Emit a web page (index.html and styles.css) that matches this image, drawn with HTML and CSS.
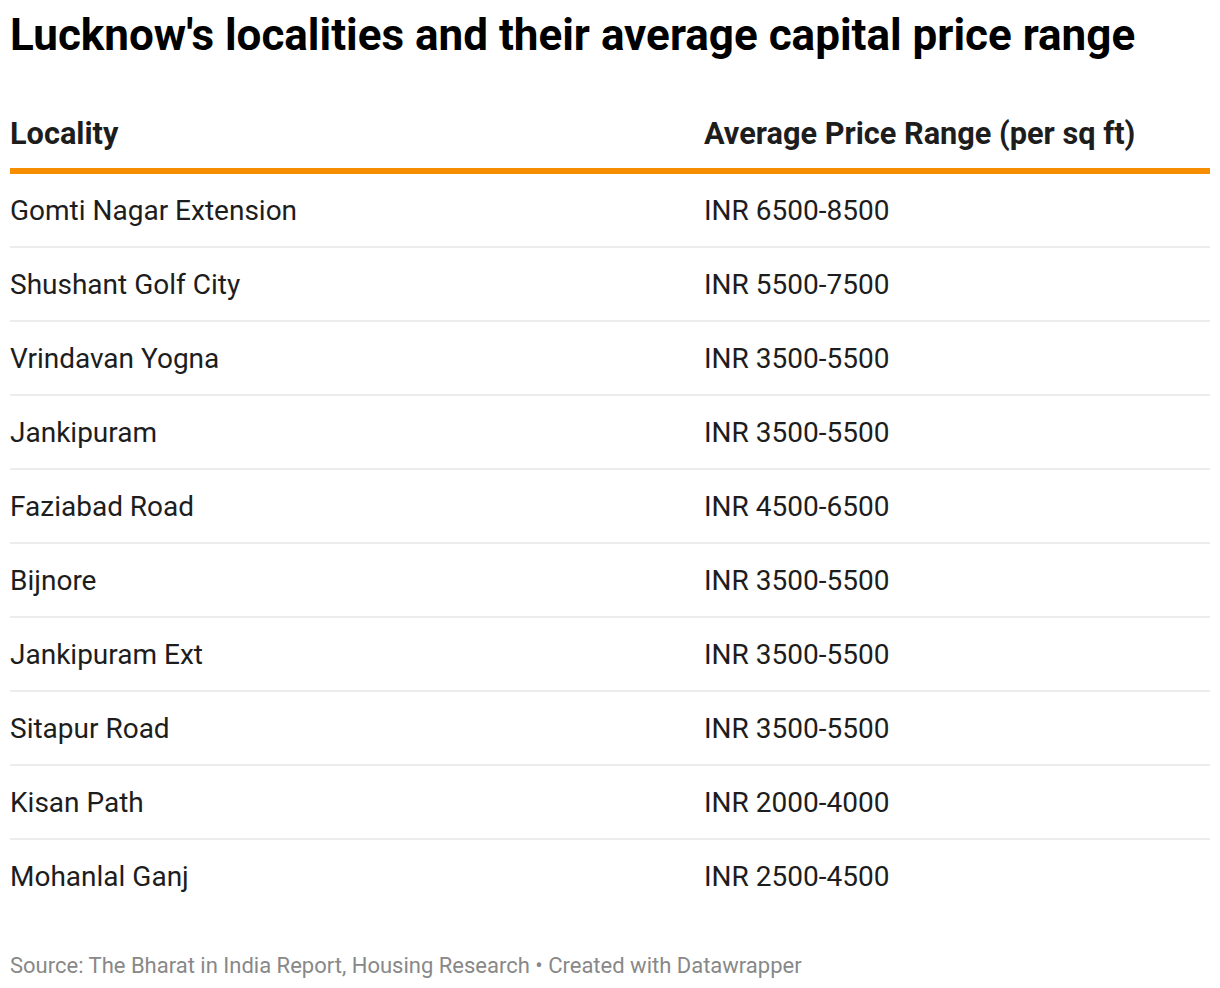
FILE: index.html
```html
<!DOCTYPE html>
<html lang="en">
<head>
<meta charset="utf-8">
<title>Lucknow's localities and their average capital price range</title>
<link rel="stylesheet" href="styles.css">
</head>
<body>
<div class="chart">
  <h1 class="title">Lucknow's localities and their average capital price range</h1>
  <div class="table">
    <div class="row head">
      <div class="cell">Locality</div>
      <div class="cell">Average Price Range (per sq ft)</div>
    </div>
    <div class="row"><div class="cell">Gomti Nagar Extension</div><div class="cell">INR 6500-8500</div></div>
    <div class="row"><div class="cell">Shushant Golf City</div><div class="cell">INR 5500-7500</div></div>
    <div class="row"><div class="cell">Vrindavan Yogna</div><div class="cell">INR 3500-5500</div></div>
    <div class="row"><div class="cell">Jankipuram</div><div class="cell">INR 3500-5500</div></div>
    <div class="row"><div class="cell">Faziabad Road</div><div class="cell">INR 4500-6500</div></div>
    <div class="row"><div class="cell">Bijnore</div><div class="cell">INR 3500-5500</div></div>
    <div class="row"><div class="cell">Jankipuram Ext</div><div class="cell">INR 3500-5500</div></div>
    <div class="row"><div class="cell">Sitapur Road</div><div class="cell">INR 3500-5500</div></div>
    <div class="row"><div class="cell">Kisan Path</div><div class="cell">INR 2000-4000</div></div>
    <div class="row last"><div class="cell">Mohanlal Ganj</div><div class="cell">INR 2500-4500</div></div>
  </div>
  <p class="footer">Source: The Bharat in India Report, Housing Research • Created with Datawrapper</p>
</div>
</body>
</html>
```

FILE: styles.css
```css
html, body {
  margin: 0;
  padding: 0;
  background: #ffffff;
}

.chart {
  padding: 9px 10px 0 10px;
  font-family: Roboto, "Liberation Sans", sans-serif;
  color: #1d1d1d;
}

.title {
  margin: 0;
  font-size: 44px;
  font-weight: 700;
  line-height: 52px;
  color: #000000;
}

.table {
  margin-top: 56px;
  display: flex;
  flex-direction: column;
}

.row {
  display: grid;
  grid-template-columns: 694px 1fr;
  font-size: 28px;
  line-height: 32px;
  border-bottom: 2px solid #ececec;
}

.row .cell {
  padding: 21px 0 19px 0;
}

.row.head {
  font-size: 30.7px;
  font-weight: 700;
  border-bottom: 6px solid #f68e00;
}

.row.head .cell {
  padding: 1px 0 18px 0;
}

.row.last {
  border-bottom: none;
}

.footer {
  margin: 41px 0 0 0;
  font-size: 22px;
  line-height: 26px;
  color: #888888;
}
```
